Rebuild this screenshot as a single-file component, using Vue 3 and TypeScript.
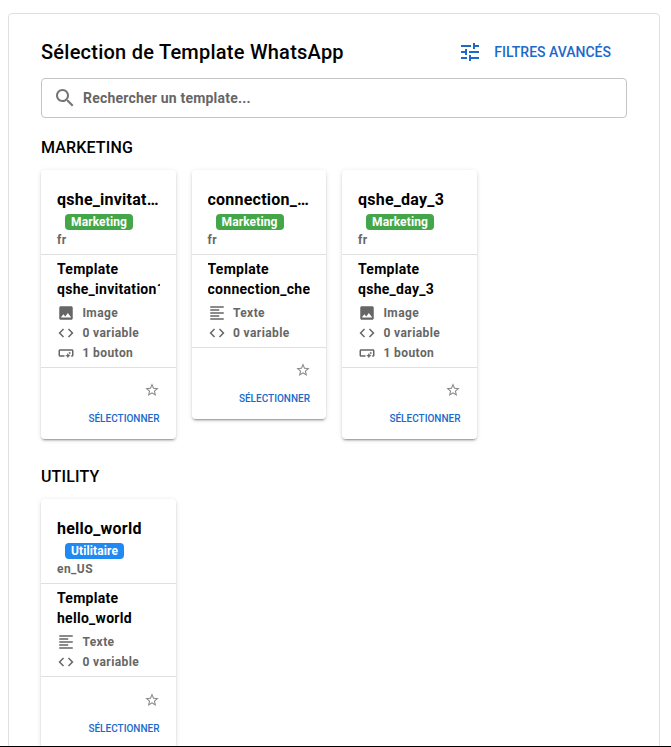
<script setup lang="ts">
interface Template {
  name: string
  lang: string
  tag: string
  media: 'image' | 'text'
  variables: number
  buttons: number
}
interface Section {
  title: string
  tone: string
  items: Template[]
}

const sections: Section[] = [
  {
    title: 'MARKETING',
    tone: 'green',
    items: [
      { name: 'qshe_invitation1', lang: 'fr', tag: 'Marketing', media: 'image', variables: 0, buttons: 1 },
      { name: 'connection_check', lang: 'fr', tag: 'Marketing', media: 'text', variables: 0, buttons: 0 },
      { name: 'qshe_day_3', lang: 'fr', tag: 'Marketing', media: 'image', variables: 0, buttons: 1 },
    ],
  },
  {
    title: 'UTILITY',
    tone: 'blue',
    items: [
      { name: 'hello_world', lang: 'en_US', tag: 'Utilitaire', media: 'text', variables: 0, buttons: 0 },
    ],
  },
]
</script>

<template>
  <div class="screen">
    <main class="paper">
      <header class="top">
        <h1>Sélection de Template WhatsApp</h1>
        <button class="filters" type="button">
          <svg viewBox="0 0 24 24"><path d="M3 17v2h6v-2H3zM3 5v2h10V5H3zm10 16v-2h8v-2h-8v-2h-2v6h2zM7 9v2H3v2h4v2h2V9H7zm14 4v-2H11v2h10zm-6-4h2V7h4V5h-4V3h-2v6z" /></svg>
          <span>FILTRES AVANCÉS</span>
        </button>
      </header>

      <label class="search">
        <svg viewBox="0 0 24 24"><path d="M15.5 14h-.79l-.28-.27C15.41 12.59 16 11.11 16 9.5 16 5.91 13.09 3 9.5 3S3 5.91 3 9.5 5.91 16 9.5 16c1.61 0 3.09-.59 4.23-1.57l.27.28v.79l5 4.99L20.49 19l-4.99-5zm-6 0C7.01 14 5 11.99 5 9.5S7.01 5 9.5 5 14 7.01 14 9.5 11.99 14 9.5 14z" /></svg>
        <input type="text" placeholder="Rechercher un template..." />
      </label>

      <section v-for="s in sections" :key="s.title" class="group">
        <h2>{{ s.title }}</h2>
        <div class="grid">
          <article v-for="t in s.items" :key="t.name" class="card">
            <div class="head">
              <h3>{{ t.name }}</h3>
              <span class="tag" :class="s.tone">{{ t.tag }}</span>
              <div class="lang">{{ t.lang }}</div>
            </div>
            <div class="body">
              <p class="desc">Template {{ t.name }}</p>
              <div class="line">
                <svg v-if="t.media === 'image'" viewBox="0 0 24 24"><path d="M21 19V5c0-1.100-.9-2-2-2H5c-1.100 0-2 .9-2 2v14c0 1.100.9 2 2 2h14c1.100 0 2-.9 2-2zM8.500 13.500l2.500 3.010L14.500 12l4.500 6H5l3.500-4.500z" /></svg>
                <svg v-else class="thin" viewBox="0 0 24 24"><path d="M15 15H3v2h12v-2zm0-8H3v2h12V7zM3 13h18v-2H3v2zm0 8h18v-2H3v2zM3 3v2h18V3H3z" /></svg>
                <span>{{ t.media === 'image' ? 'Image' : 'Texte' }}</span>
              </div>
              <div class="line">
                <svg viewBox="0 0 24 24"><path d="M9.400 16.600 4.800 12l4.600-4.600L8 6l-6 6 6 6 1.400-1.400zm5.200 0 4.600-4.600-4.600-4.600L16 6l6 6-6 6-1.400-1.400z" /></svg>
                <span>{{ t.variables }} variable</span>
              </div>
              <div v-if="t.buttons" class="line">
                <svg viewBox="0 0 24 24"><path d="M22 9v6c0 1.100-.9 2-2 2h-1v-2h1V9H4v6h6v2H4c-1.100 0-2-.9-2-2V9c0-1.100.9-2 2-2h16c1.100 0 2 .9 2 2zm-7.500 10 1.090-2.410L18 15.500l-2.410-1.090L14.500 12l-1.090 2.410L11 15.500l2.410 1.090L14.500 19zm2.500-5 .62-1.380L19 12l-1.380-.62L17 10l-.62 1.380L15 12l1.380.62L17 14z" /></svg>
                <span>{{ t.buttons }} bouton</span>
              </div>
            </div>
            <div class="foot">
              <svg class="star" viewBox="0 0 24 24"><path d="m22 9.240-7.190-.62L12 2 9.190 8.630 2 9.240l5.460 4.730L5.820 21 12 17.270 18.180 21l-1.630-7.030L22 9.240zM12 15.400l-3.760 2.270 1-4.280-3.320-2.880 4.380-.38L12 6.100l1.710 4.040 4.380.38-3.320 2.880 1 4.280L12 15.400z" /></svg>
              <button type="button" class="select">SÉLECTIONNER</button>
            </div>
          </article>
        </div>
      </section>
    </main>
  </div>
</template>

<style>
body {
  margin: 0;
  background: #fff;
}
</style>

<style scoped>
.screen {
  box-sizing: border-box;
  height: 747px;
  padding: 13px 11px 0 8px;
  overflow: hidden;
  border-bottom: 1px solid #000;
  font-family: Roboto, "Liberation Sans", sans-serif;
  color: #000;
}
.screen * {
  box-sizing: border-box;
}
svg {
  display: block;
  flex: none;
  fill: currentColor;
}
h1,
h2,
h3,
p {
  margin: 0;
}
button {
  border: 0;
  padding: 0;
  background: none;
  font-family: inherit;
  color: #1b69ca;
}
.paper {
  height: 900px;
  padding: 22px 32px;
  border: 1px solid #e0e0e0;
  border-radius: 4px;
}
.top {
  display: flex;
  align-items: center;
  justify-content: space-between;
  height: 32px;
  padding-right: 16px;
}
h1 {
  font-size: 20px;
  font-weight: 500;
  line-height: 32px;
  letter-spacing: 0.24px;
}
.filters {
  display: flex;
  align-items: center;
  gap: 12px;
  font-size: 14px;
  font-weight: 500;
  line-height: 24px;
}
.filters svg {
  width: 24px;
  height: 24px;
}
.search {
  display: flex;
  align-items: center;
  width: 586px;
  height: 40px;
  margin-top: 10px;
  padding: 0 11px;
  gap: 6px;
  border: 1px solid #c4c4c4;
  border-radius: 4px;
  color: #757575;
}
.search svg {
  width: 24px;
  height: 24px;
}
.search input {
  flex: 1;
  padding: 0;
  border: 0;
  outline: 0;
  background: none;
  font: 700 14px/20px Roboto, sans-serif;
  letter-spacing: 0.2px;
}
.search input::placeholder {
  color: #666;
  opacity: 1;
}
.group {
  padding-top: 16px;
}
.group + .group {
  padding-top: 24.4px;
}
h2 {
  height: 36px;
  font-size: 16px;
  font-weight: 500;
  line-height: 27px;
  letter-spacing: 0.15px;
}
.grid {
  display: grid;
  grid-template-columns: repeat(4, 134.5px);
  gap: 16px;
  align-items: start;
}
.card {
  overflow: hidden;
  border-radius: 4px;
  background: #fff;
  box-shadow: 0 3px 1px -2px rgba(0, 0, 0, 0.2), 0 2px 2px rgba(0, 0, 0, 0.14), 0 1px 5px rgba(0, 0, 0, 0.12);
}
.head {
  height: 85px;
  padding: 16px 16px 0;
  border-bottom: 1px solid #e0e0e0;
}
h3 {
  overflow: hidden;
  font-size: 16px;
  font-weight: 700;
  line-height: 28px;
  letter-spacing: 0.23px;
  white-space: nowrap;
  text-overflow: ellipsis;
}
.tag {
  display: block;
  width: fit-content;
  height: 16px;
  margin-left: 8px;
  padding: 0 6px;
  border-radius: 4px;
  color: #fff;
  font-size: 12px;
  font-weight: 700;
  line-height: 16px;
  letter-spacing: 0.12px;
}
.green {
  background: #43a648;
}
.blue {
  background: #2089f2;
}
.lang,
.line {
  color: #666;
  font-size: 12px;
  font-weight: 700;
  line-height: 20px;
  letter-spacing: 0.42px;
}
.body {
  padding: 4px 16px;
  border-bottom: 1px solid #e0e0e0;
}
.desc {
  height: 44px;
  overflow: hidden;
  font-size: 14px;
  font-weight: 700;
  line-height: 20px;
  letter-spacing: 0.28px;
}
.line {
  display: flex;
  align-items: center;
  gap: 7.4px;
  height: 20px;
}
.line svg {
  width: 18px;
  height: 18px;
}
.foot {
  display: flex;
  flex-direction: column;
  align-items: flex-end;
  height: 71px;
  padding: 14.4px 16px 0;
}
.star {
  width: 16px;
  height: 16px;
  margin-right: -0.6px;
  color: #8a8a8a;
}
.select {
  margin-top: 11.9px;
  font-size: 10px;
  font-weight: 500;
  line-height: 18px;
}
</style>
